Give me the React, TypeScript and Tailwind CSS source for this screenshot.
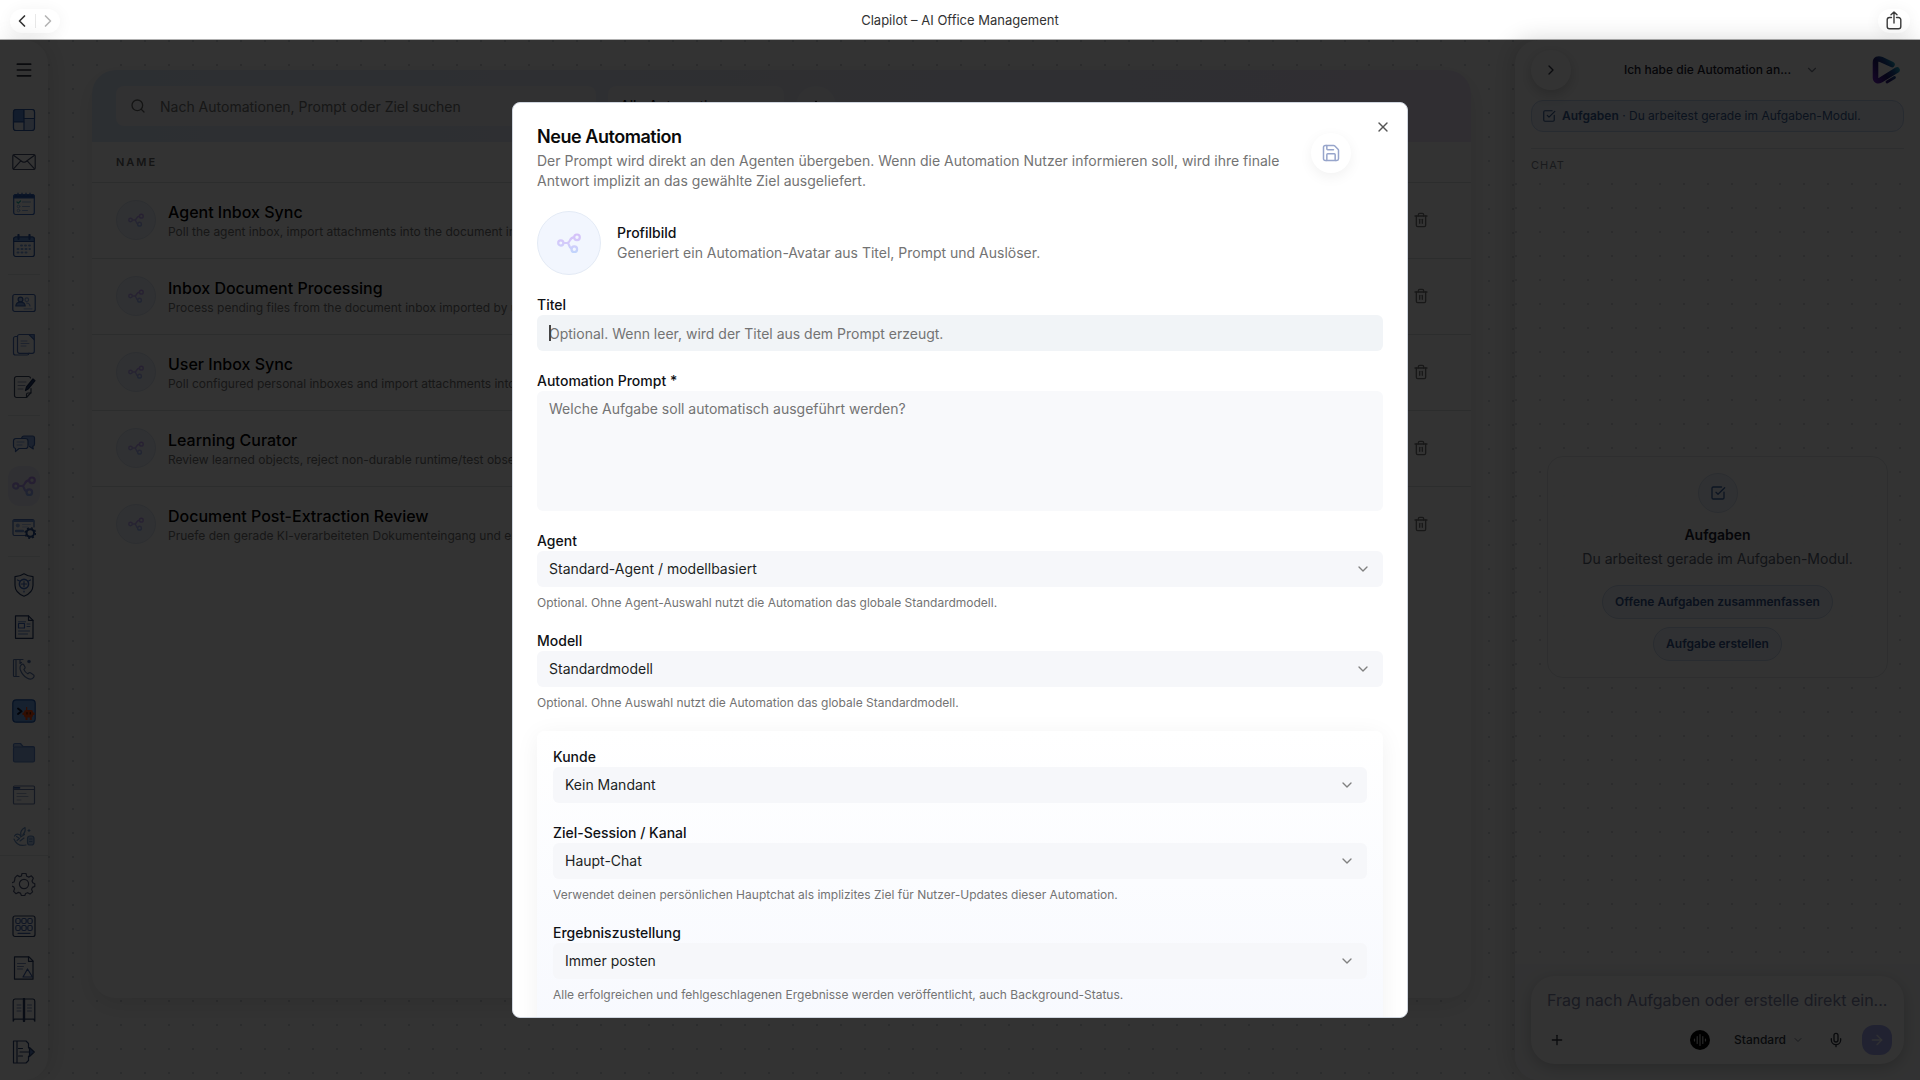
import React from "react";
import {
  ArrowRight,
  ChevronDown,
  ChevronLeft,
  ChevronRight,
  Menu,
  Mic,
  Plus,
  Save,
  Search,
  SquareCheckBig,
  Trash2,
  X,
} from "lucide-react";

const FlowIcon = ({ className = "" }: { className?: string }) => (
  <svg viewBox="0 0 24 24" fill="none" className={className}>
    <defs>
      <linearGradient id="flow" x1="12" y1="2" x2="12" y2="22" gradientUnits="userSpaceOnUse">
        <stop offset="0" stopColor="#b98af5" />
        <stop offset="0.5" stopColor="#b7a0f8" />
        <stop offset="1" stopColor="#8fb4fb" />
      </linearGradient>
    </defs>
    <g stroke="url(#flow)" strokeWidth="2.2" strokeLinecap="round">
      <circle cx="3.8" cy="12" r="2.6" />
      <circle cx="20" cy="6.3" r="2.8" />
      <circle cx="17.3" cy="18.2" r="2.8" />
      <path d="M7 12h4M10.5 12c3-.6 1.6-5.2 6.4-5.6M10.5 12c2.2.8 1 4.400 4 5.600" />
    </g>
  </svg>
);

const Icon = ({ children, color = "#3b64b5" }: { children: React.ReactNode; color?: string }) => (
  <svg
    viewBox="0 0 24 24"
    fill="none"
    stroke={color}
    strokeWidth="1.2"
    strokeLinecap="round"
    strokeLinejoin="round"
    className="size-6"
  >
    {children}
  </svg>
);

type NavItem = { label: string; icon: React.ReactNode; active?: boolean };

const navGroups: NavItem[][] = [
  [
    {
      label: "Dashboard",
      icon: (
        <Icon color="#2f5cab">
          <rect x="1.5" y="1.5" width="21" height="21" rx="2.5" fill="#c3d6f7" />
          <path d="M4 1.5h8V14H1.5V4A2.5 2.5 0 0 1 4 1.5z" fill="#5d8ddb" />
          <path d="M12 1.5h8A2.5 2.5 0 0 1 22.5 4v6.500H12zM1.500 14H12v8.500H4A2.500 2.500 0 0 1 1.500 20z" fill="#eef3fc" />
        </Icon>
      ),
    },
    {
      label: "E-Mail",
      icon: (
        <Icon color="#46506e">
          <rect x=".8" y="4.5" width="22.4" height="15" rx="1.5" />
          <path d="M1.5 5.300 10 11.500c1.400 1 2.600 1 4 0l8.500-6.200M1.500 18.800l7.300-8M22.500 18.800l-7.300-8" />
        </Icon>
      ),
    },
    {
      label: "Aufgaben",
      icon: (
        <Icon color="#3a6cc4">
          <rect x="1.7" y="2.5" width="20.6" height="20" rx="2" />
          <path d="M1.7 6V4.5a2 2 0 0 1 2-2h16.600a2 2 0 0 1 2 2V6z" fill="#2a5cb4" />
          <path d="M6 1v2.500M10 1v2.500M14 1v2.500M18 1v2.500" />
          <g stroke="#8fb5e8" strokeWidth="1">
            <path d="M10.5 10h8M10.5 14.5h7M10.5 18.5h5" />
            <circle cx="6.5" cy="14.5" r="1.3" />
            <circle cx="6.5" cy="18.5" r="1.3" />
          </g>
          <path d="m5 10 1.200 1.200L8.500 9" stroke="#22b8b0" />
        </Icon>
      ),
    },
    {
      label: "Kalender",
      icon: (
        <Icon color="#2c58a8">
          <rect x="1.7" y="3" width="20.6" height="19.5" rx="2" />
          <path d="M1.700 7.500V5a2 2 0 0 1 2-2h16.600a2 2 0 0 1 2 2v2.500z" fill="#6c9ae0" />
          <path d="M6.5 1v4M17.5 1v4" strokeWidth="2.2" />
          <path d="M9 11.500h9M5.500 15h12.500M5.500 18.500h9" stroke="#7fa7e6" strokeWidth="2" strokeDasharray="1 3" />
        </Icon>
      ),
    },
  ],
  [
    {
      label: "Kontakte",
      icon: (
        <Icon color="#3f67b4">
          <rect x=".8" y="3.5" width="22.4" height="17" rx="2" />
          <circle cx="8.5" cy="8.5" r="2.4" fill="#b7cdf4" />
          <path d="M3.800 15c.3-2.600 2-3.800 4.700-3.800s4.400 1.200 4.700 3.800z" fill="#7ca3e6" />
          <circle cx="14.8" cy="8.7" r="1.8" stroke="#86a8e6" />
          <path d="M14.5 12c2 0 3.200.8 3.500 3" stroke="#86a8e6" />
          <path d="M12 17.8h8" stroke="#a9c1ee" />
        </Icon>
      ),
    },
    {
      label: "Dokumente",
      icon: (
        <Icon color="#4a70ba">
          <path d="M5.500 3.500h-2a2 2 0 0 0-2 2V20a2 2 0 0 0 2 2h11.500a2 2 0 0 0 2-1.800" />
          <path d="M7.500 1.500h10l4.800 4.800v12a2 2 0 0 1-2 2H7.500a2 2 0 0 1-2-2V3.500a2 2 0 0 1 2-2z" />
          <path d="M17 1.500h5.300v5.300z" fill="#7ca3e6" />
          <path d="M9 8h6M9 10.500h8M9 13h5" stroke="#94b1e4" strokeWidth="1" />
        </Icon>
      ),
    },
    {
      label: "Notizen",
      icon: (
        <Icon color="#3b4660">
          <path d="M19 13.500v4L14.500 22.500H4.500a2 2 0 0 1-2-2v-17a2 2 0 0 1 2-2h12a2 2 0 0 1 2 1.500" />
          <path d="M14.500 22.500v-3a1.500 1.500 0 0 1 1.500-1.500h3" />
          <path d="M6 7h8M6 10.500h7M6 14h5" stroke="#8b97b5" strokeWidth="1" />
          <path d="m13.500 15.500 1-3.500 6.500-8 2 1.700-6.500 8z" fill="#26427e" stroke="#1d2f57" />
        </Icon>
      ),
    },
  ],
  [
    {
      label: "Chat",
      icon: (
        <Icon color="#3f67b4">
          <path d="M9.500 6.500c.3-1.500 1-2.500 2.500-2.500h8.500a2 2 0 0 1 2 2v6a2.500 2.500 0 0 1-1.800 2.400l.6 2.600-3.800-2.500" fill="#88abe8" />
          <path d="M4 6.500h9.500A2.500 2.500 0 0 1 16 9v5a2.500 2.500 0 0 1-2.500 2.500H7L3.500 19.500v-3A2.500 2.500 0 0 1 1.500 14V9A2.500 2.500 0 0 1 4 6.500z" fill="#eef3fc" />
          <path d="M5 10h7M5 13h5" stroke="#8fb0e8" strokeWidth="1" />
        </Icon>
      ),
    },
    { label: "Automationen", icon: <FlowIcon className="size-6" />, active: true },
    {
      label: "Portale",
      icon: (
        <Icon color="#4a70ba">
          <path d="M13 19.500H2.500a1.500 1.500 0 0 1-1.500-1.500V5A1.500 1.500 0 0 1 2.500 3.500h18A1.500 1.500 0 0 1 22 5v6" />
          <path d="M1.500 5h20" strokeWidth="2" stroke="#6f98dd" />
          <circle cx="5.8" cy="9.5" r="2" fill="#94b5ec" stroke="none" />
          <path d="M4 15h7" strokeWidth="2.4" stroke="#6f98dd" />
          <path d="M10.5 8.500h8M10.500 11h5" stroke="#b9cdf1" strokeWidth="1" />
          <circle cx="18.3" cy="17" r="3.8" stroke="#234a8f" strokeWidth="2" />
          <circle cx="18.3" cy="17" r="5.2" stroke="#234a8f" strokeWidth="1.4" strokeLinecap="butt" strokeDasharray="2 2.08" />
        </Icon>
      ),
    },
  ],
  [
    {
      label: "Sicherheit",
      icon: (
        <Icon color="#243a66">
          <path d="M12 .8c3 2 5.500 2.600 9 2.800v8.600c0 5.200-3.500 8.800-9 11-5.500-2.200-9-5.800-9-11V3.600c3.500-.2 6-.8 9-2.800z" />
          <circle cx="12" cy="11" r="4.6" stroke="#3e6bc2" strokeWidth="1.6" />
          <path d="M12 8.500v5M9.500 11h5M5.500 7l2 1M18.500 7l-2 1M12 18v1" stroke="#3e6bc2" />
        </Icon>
      ),
    },
    {
      label: "Rechnungen",
      icon: (
        <Icon color="#243a66">
          <path d="M3.500.8h13l4.500 4.500v18H3.500z" />
          <path d="M16.500.8v4.500H21" />
          <rect x="6.5" y="8.5" width="6" height="4.5" stroke="#3e6bc2" />
          <path d="M6.500 6.800h7M15 9h3M15 11.500h3M6.500 16h11M6.500 19h9" stroke="#5c83c9" strokeWidth="1" />
        </Icon>
      ),
    },
    {
      label: "Telefonie",
      icon: (
        <Icon color="#5d7aaf">
          <path d="M7 19.500H2.500a1 1 0 0 1-1-1v-15a1 1 0 0 1 1-1H11M4 2.500v17M8 2.500v4l1.500-1" />
          <path d="M9 8c1-1.200 2.200-1 3 .2l1 1.800c.4 1-.4 1.800-1.200 2.400.8 2 2 3.400 4 4.400.8-.8 1.600-1.600 2.600-1l2.600 1.600c1.400.8 1.400 2 .4 3.200-1.600 2-4 1.800-6.400.4-3-1.800-5.400-4.600-6.600-8C7.800 11 7.800 9.300 9 8z" />
          <circle cx="17" cy="4.5" r="1.2" fill="#2f5cab" />
        </Icon>
      ),
    },
    {
      label: "Terminal",
      icon: (
        <Icon color="#1d57b0">
          <rect x=".8" y=".8" width="22.4" height="22.4" rx="3.5" fill="#6da3e8" />
          <path d="m6 9.500 3.500 2.800L6 15" stroke="#0c1730" strokeWidth="2" />
          <g stroke="none" fill="#f8480b">
            <rect x="12" y="11" width="9" height="7.5" rx="2" />
            <path d="M10.500 13.500h12v2.500h-12zM13.500 18h2v3h-2zM17.800 18h2v3h-2zM14 8h1.200v3.500H14z" />
          </g>
          <path d="M15 13.500v1.500M18.300 13.500v1.500" stroke="#3c1608" />
        </Icon>
      ),
    },
    {
      label: "Dateien",
      icon: (
        <Icon color="#5b84ca">
          <path d="M1.500 6V4a1.500 1.500 0 0 1 1.500-1.500h5.500L11 5.500h10A1.500 1.500 0 0 1 22.500 7" fill="#a9c1e8" />
          <rect x="1.5" y="6" width="21" height="15" rx="1.5" fill="#8eb0e6" />
        </Icon>
      ),
    },
    {
      label: "Browser",
      icon: (
        <Icon color="#6a7fae">
          <rect x="1.5" y="3" width="21" height="18" rx="1" />
          <path d="M1.500 6.500h21" />
          <path d="M2.500 4.800h5" stroke="#3f67b4" strokeWidth="1.8" />
          <path d="M5 10.500h9M5 13.500h11M5 17h4" stroke="#a8b7d8" strokeWidth="1" />
        </Icon>
      ),
    },
    {
      label: "Wissen",
      icon: (
        <Icon color="#6c94c9">
          <path d="M9 10c-1-3 .5-5.500 4-7.500.5 2.500 0 5-2 7M2.500 11c1.500-2.500 4-2.500 6-.5M2 14c2 5 6 7.500 12 6M4.500 11.500l3 2-2.500 2M8.500 12l4-2.500M8 16l4-3" />
          <path d="M16 5.500h2M17 4.500v2" />
          <rect x="15.5" y="11" width="6.5" height="9" rx="2.5" fill="#b4cbee" />
          <path d="M17.500 14h2.500M17.500 16.500h2.500" strokeWidth="1" />
        </Icon>
      ),
    },
  ],
];

const footerNav: NavItem[] = [
  {
    label: "Einstellungen",
    icon: (
      <Icon color="#4d5678">
        <circle cx="12" cy="12" r="4.6" />
        <path d="M10 1.500h4l.8 2.800 2 .8L19.400 3.800l1.900 2.400-1.300 2.700.8 1.900 2 1v2.600l-2.400 1-.8 2 1 2.500-2.600 2.200-2.400-1.400-2 .8-.8 2h-3.400l-1-2.400-2-.7-2.400 1.300-2.400-2.300 1-2.600-.8-1.900-2.300-1v-3l2.500-.9.7-2L3 5.600l2.300-2.200 2.300 1.200 1.800-.6z" />
      </Icon>
    ),
  },
  {
    label: "Nummernblock",
    icon: (
      <Icon color="#2c3f68">
        <rect x="1" y="2" width="22" height="20.5" rx="2" />
        <g stroke="#4569b3">
          <rect x="3.8" y="4.5" width="4.4" height="5" rx="1.5" />
          <rect x="9.8" y="4.5" width="4.4" height="5" rx="1.5" />
          <rect x="15.8" y="4.5" width="4.4" height="5" rx="1.5" />
          <rect x="3.8" y="11.5" width="4.4" height="5" rx="1.5" />
          <rect x="9.8" y="11.5" width="4.4" height="5" rx="1.5" />
          <rect x="15.8" y="11.5" width="4.4" height="5" rx="1.5" />
          <path d="M6 19.300h12" />
        </g>
      </Icon>
    ),
  },
  {
    label: "Fehlerprotokoll",
    icon: (
      <Icon color="#2c3f68">
        <path d="M2.500.8h14.500l4 4.200v18.200H2.500z" />
        <path d="M16.500.8v4.500H21" />
        <path d="M5.500 7.500h8M5.500 10.500h6M5.500 13h5" stroke="#7c93c4" strokeWidth="1" />
        <path d="m15.500 13 5 8h-9.500z" stroke="#3e62ab" />
      </Icon>
    ),
  },
  {
    label: "Handbuch",
    icon: (
      <Icon color="#2c3f68">
        <path d="M1.200 23.200V3A2 2 0 0 1 3 1h18a2 2 0 0 1 1.800 2v20.200l-1-2H2.200z" />
        <path d="M12 1v22" strokeWidth="2.4" />
        <path d="M5 7h4M5 10h4M5 13h4M15.500 7h4M15.500 10h4M15.500 13h4" stroke="#7c93c4" strokeWidth="1" />
      </Icon>
    ),
  },
  {
    label: "Abmelden",
    icon: (
      <Icon color="#2c4474">
        <path d="M16.500 8V3.500L14 1H1.500v22H14l2.500-2.500V16M5 1v22" />
        <path d="M8 12h10.500M6.500 8.500h4M6.500 16h4" />
        <path d="m17.500 7.500 4.800 4.500-4.800 4.500z" fill="#5b80c5" />
      </Icon>
    ),
  },
];

const automations = [
  { name: "Agent Inbox Sync", text: "Poll the agent inbox, import attachments into the document inbox" },
  { name: "Inbox Document Processing", text: "Process pending files from the document inbox imported by users" },
  { name: "User Inbox Sync", text: "Poll configured personal inboxes and import attachments into" },
  { name: "Learning Curator", text: "Review learned objects, reject non-durable runtime/test observations" },
  { name: "Document Post-Extraction Review", text: "Pruefe den gerade KI-verarbeiteten Dokumenteingang und ergaenze" },
];

const NavButton = ({ item }: { item: NavItem }) => (
  <button
    aria-label={item.label}
    className={`flex h-10 w-8 shrink-0 items-center justify-center rounded-xl ${item.active ? "bg-[#eeeefc]" : ""}`}
  >
    {item.icon}
  </button>
);

const Sidebar = () => (
  <nav className="flex w-12 shrink-0 flex-col items-center rounded-r-3xl bg-white pb-2 shadow-[4px_0_24px_rgba(0,0,0,0.12)]">
    <button aria-label="Menü" className="flex h-15 w-8 shrink-0 items-center justify-center text-[#303640]">
      <Menu className="size-5" strokeWidth={2} />
    </button>
    <div className="flex min-h-0 flex-1 flex-col items-center overflow-hidden">
      {navGroups.map((group, i) => (
        <React.Fragment key={i}>
          {i > 0 && <div className="my-2 h-px w-8 shrink-0 bg-[#e6e8ec]" />}
          <div className="flex shrink-0 flex-col gap-0.5">
            {group.map((item) => (
              <NavButton key={item.label} item={item} />
            ))}
          </div>
        </React.Fragment>
      ))}
    </div>
    <div className="flex w-full shrink-0 flex-col items-center gap-0.5 border-t border-[#e6e8ec] pt-2">
      {footerNav.map((item) => (
        <NavButton key={item.label} item={item} />
      ))}
    </div>
  </nav>
);

const AutomationList = () => (
  <main className="flex min-w-0 flex-1 px-11 pt-[30px] pb-[82px]">
    <div className="flex min-w-0 flex-1 flex-col overflow-hidden rounded-3xl bg-white shadow-[0_8px_24px_rgba(0,0,0,0.10)]">
      <div className="flex h-[72px] shrink-0 items-center gap-3 bg-linear-to-r from-[#dce8fa] via-[#e8eaf6] to-[#eee6fa] px-6">
        <div className="flex h-10 w-[480px] items-center gap-3.5 rounded-lg bg-[#f2f4f8] px-3.5">
          <Search className="size-4 shrink-0 text-[#666]" />
          <input
            aria-label="Automationen suchen"
            placeholder="Nach Automationen, Prompt oder Ziel suchen"
            className="w-full bg-transparent pt-0.5 text-sm outline-none placeholder:text-[#737373]"
          />
        </div>
        <select aria-label="Automationen filtern" className="h-10 w-44 appearance-none rounded-lg bg-[#f2f4f8] px-3 text-sm">
          <option>Alle Automationen</option>
        </select>
        <button aria-label="Automation anlegen" className="flex size-10 items-center justify-center rounded-full bg-[#f2f4f8]">
          <Plus className="size-4" />
        </button>
      </div>
      <table className="w-full table-fixed border-collapse">
        <thead>
          <tr className="h-10 border-b border-[#dcdee2]">
            <th className="pl-6 text-left text-[11px] font-semibold tracking-[2px] text-[#666]">NAME</th>
            <th aria-label="Aktionen" className="w-40" />
          </tr>
        </thead>
        <tbody>
          {automations.map((a) => (
            <tr key={a.name} className="h-[76px] border-b border-[#dcdee2] last:border-0">
              <td className="pl-6">
                <div className="flex items-center gap-3">
                  <span className="flex size-10 shrink-0 items-center justify-center rounded-full border border-[#dde5f2] bg-[#eff4fd]">
                    <FlowIcon className="size-4 opacity-80" />
                  </span>
                  <div className="min-w-0 pt-1">
                    <div className="text-base leading-5 font-medium text-black">{a.name}</div>
                    <div className="truncate text-xs leading-5 text-[#737373]">{a.text}</div>
                  </div>
                </div>
              </td>
              <td className="pr-8 text-right">
                <button aria-label={`${a.name} löschen`} className="inline-flex size-9 items-center justify-center text-[#777]">
                  <Trash2 className="size-4" />
                </button>
              </td>
            </tr>
          ))}
        </tbody>
      </table>
    </div>
  </main>
);

const Logo = () => (
  <svg viewBox="0 0 28 28" fill="none" className="mr-1 size-7">
    <defs>
      <linearGradient id="mark" x1="3" y1="24" x2="26" y2="8" gradientUnits="userSpaceOnUse">
        <stop offset="0" stopColor="#6420b8" />
        <stop offset="0.4" stopColor="#231a70" />
        <stop offset="0.7" stopColor="#1b4f9c" />
        <stop offset="1" stopColor="#20bfd0" />
      </linearGradient>
    </defs>
    <g stroke="url(#mark)" strokeLinecap="round" strokeLinejoin="round">
      <path d="M20 8.500 9.500 3.600C6 2 3.500 3.500 3.500 6.500v15c0 3 2.500 4 5 2.600L25 14" strokeWidth="5.6" />
      <path d="m15 26 7.500-4.500" strokeWidth="2.8" />
    </g>
  </svg>
);

const ChatPanel = () => (
  <aside className="flex w-[405px] shrink-0 flex-col overflow-hidden rounded-l-3xl bg-white shadow-[-4px_0_24px_rgba(0,0,0,0.16)]">
    <div className="px-4 pt-2.5">
      <div className="flex h-10 items-center justify-between">
        <button
          aria-label="Chat einklappen"
          className="flex size-10 items-center justify-center rounded-full bg-white text-[#333a48] shadow-[0_4px_14px_rgba(0,0,0,0.2)]"
        >
          <ChevronRight className="size-4" />
        </button>
        <button className="flex items-center gap-3.5 text-xs font-medium text-[#1c2230]">
          Ich habe die Automation an...
          <ChevronDown className="size-3.5 text-[#7a8090]" />
        </button>
        <Logo />
      </div>
      <div className="mt-2.5 flex h-8 items-center gap-1.5 rounded-xl border border-[#c3d4ee] bg-[#edf3fc] px-2.5 text-xs text-[#3a5f97]">
        <SquareCheckBig className="size-3.5 shrink-0" />
        <span className="truncate">
          <strong className="font-semibold">Aufgaben</strong> · Du arbeitest gerade im Aufgaben-Modul.
        </span>
      </div>
      <div className="mt-4 border-t border-[#e2e4e8] pt-2 text-[11px] leading-4 tracking-[1px] text-[#7c828e]">CHAT</div>
    </div>
    <div className="mt-2.5 flex flex-1 items-center justify-center bg-[radial-gradient(circle_at_1px_1px,#dadde2_1px,transparent_0)] bg-size-[24px_24px] px-8 pb-3.5">
      <div className="flex w-full flex-col items-center rounded-2xl border border-[#e4e6ea] bg-white/90 p-4">
        <span className="flex size-10 items-center justify-center rounded-full border border-[#d6e0f0] bg-[#f0f5fd] text-[#3d67a8]">
          <SquareCheckBig className="size-4" />
        </span>
        <h2 className="mt-3 text-sm leading-5 font-semibold text-[#1c2230]">Aufgaben</h2>
        <p className="mt-1 text-sm leading-5 text-[#5c6474]">Du arbeitest gerade im Aufgaben-Modul.</p>
        <div className="mt-4 flex flex-col items-center gap-2">
          <button className="h-[34px] rounded-full border border-[#cbd9ef] bg-[#f0f5fd] px-3 text-xs font-semibold text-[#35588f]">
            Offene Aufgaben zusammenfassen
          </button>
          <button className="h-[34px] rounded-full border border-[#cbd9ef] bg-[#f0f5fd] px-3 text-xs font-semibold text-[#35588f]">
            Aufgabe erstellen
          </button>
        </div>
      </div>
    </div>
    <div className="bg-[#fafbfc] px-4 pt-3 pb-4">
      <div className="rounded-3xl bg-white pt-3 pr-3 pb-2 pl-4 shadow-[0_4px_16px_rgba(0,0,0,0.2)]">
        <input
          aria-label="Nachricht"
          placeholder="Frag nach Aufgaben oder erstelle direkt ein..."
          className="block h-6 w-full bg-transparent text-base outline-none placeholder:text-[#8085a8]"
        />
        <div className="mt-3 flex h-8 items-center text-[#303640]">
          <button aria-label="Anhang" className="flex size-5 items-center justify-center">
            <Plus className="size-4" />
          </button>
          <button aria-label="Sprachmodus" className="ml-auto flex size-5 items-center justify-center rounded-full bg-black">
            <svg viewBox="0 0 20 20" stroke="#c8c8c8" strokeWidth="1.2" strokeLinecap="round" className="size-5">
              <path d="M4.500 9v2M7.200 6.500v7M10 4.500v11M12.800 6.500v7M15.500 9v2" />
            </svg>
          </button>
          <button className="ml-6 flex items-center gap-1.5 text-xs font-medium">
            Standard
            <ChevronDown className="size-3 text-[#7a8090]" />
          </button>
          <button aria-label="Diktieren" className="ml-5 flex size-6 items-center justify-center">
            <Mic className="size-4" />
          </button>
          <button aria-label="Senden" className="ml-3.5 flex size-[30px] items-center justify-center rounded-xl bg-[#a7acf2] text-white/80">
            <ArrowRight className="size-4" />
          </button>
        </div>
      </div>
    </div>
  </aside>
);

const labelClass = "text-sm leading-5 font-medium text-[#0f1115]";

interface SelectFieldProps {
  id: string;
  label: string;
  value: string;
  hint?: string;
}

const SelectField: React.FC<SelectFieldProps> = ({ id, label, value, hint }) => (
  <div className="flex flex-col">
    <label htmlFor={id} className={labelClass}>
      {label}
    </label>
    <div className="relative">
      <select id={id} className="block h-9 w-full appearance-none rounded-md bg-[#f6f7fa] px-3 text-sm text-[#1c1f24] outline-none">
        <option>{value}</option>
      </select>
      <ChevronDown className="pointer-events-none absolute top-2.5 right-3 size-4 text-[#808080]" />
    </div>
    {hint && <p className="mt-2 text-xs leading-4 text-[#737373]">{hint}</p>}
  </div>
);

const AutomationDialog = () => (
  <div
    role="dialog"
    aria-labelledby="dialog-title"
    className="relative h-[88%] w-full max-w-4xl overflow-hidden rounded-lg border border-[#cfd5de] bg-white p-6"
  >
    <button aria-label="Schließen" className="absolute top-4 right-4 flex size-4 items-center justify-center text-[#555]">
      <X className="size-4" />
    </button>
    <form className="flex flex-col gap-5">
      <div className="flex items-start justify-between gap-3 pr-8">
        <div className="max-w-[750px]">
          <h1 id="dialog-title" className="text-lg leading-5 font-semibold tracking-tight text-[#0a0a0a]">
            Neue Automation
          </h1>
          <p className="mt-1 text-sm leading-5 text-[#737373]">
            Der Prompt wird direkt an den Agenten übergeben. Wenn die Automation Nutzer informieren soll, wird ihre finale
            Antwort implizit an das gewählte Ziel ausgeliefert.
          </p>
        </div>
        <button
          aria-label="Speichern"
          className="mt-1.5 flex size-10 shrink-0 items-center justify-center rounded-full bg-white text-[#97a5cb] shadow-[0_4px_14px_rgba(0,0,0,0.06)]"
        >
          <Save className="size-5" strokeWidth={1.8} />
        </button>
      </div>
      <div className="flex items-center gap-4">
        <span className="flex size-16 items-center justify-center rounded-full border border-[#e3eaf5] bg-[#f2f6fe]">
          <FlowIcon className="size-6 opacity-50" />
        </span>
        <div className="text-sm leading-5">
          <div className="font-medium text-[#0f1115]">Profilbild</div>
          <p className="text-[#737373]">Generiert ein Automation-Avatar aus Titel, Prompt und Auslöser.</p>
        </div>
      </div>
      <div className="flex flex-col">
        <label htmlFor="titel" className={labelClass}>
          Titel
        </label>
        <div className="relative">
          <input
            id="titel"
            placeholder="Optional. Wenn leer, wird der Titel aus dem Prompt erzeugt."
            className="block h-9 w-full rounded-md bg-[#f1f4f7] px-3 text-sm outline-none placeholder:text-[#737373]"
          />
          <span className="absolute top-2.5 left-3 h-4 w-0.5 bg-[#444]" />
        </div>
      </div>
      <div className="flex flex-col">
        <label htmlFor="prompt" className={labelClass}>
          Automation Prompt *
        </label>
        <textarea
          id="prompt"
          placeholder="Welche Aufgabe soll automatisch ausgeführt werden?"
          className="block h-30 w-full resize-none rounded-md bg-[#f8f9fb] px-3 py-2 text-sm leading-5 outline-none placeholder:text-[#737373]"
        />
      </div>
      <SelectField
        id="agent"
        label="Agent"
        value="Standard-Agent / modellbasiert"
        hint="Optional. Ohne Agent-Auswahl nutzt die Automation das globale Standardmodell."
      />
      <SelectField
        id="modell"
        label="Modell"
        value="Standardmodell"
        hint="Optional. Ohne Auswahl nutzt die Automation das globale Standardmodell."
      />
      <div className="flex flex-col gap-5 rounded-lg bg-linear-to-b from-white to-[#f7f9fe] px-4 pt-4 pb-8 shadow-[0_4px_24px_rgba(0,0,0,0.06)]">
        <SelectField id="kunde" label="Kunde" value="Kein Mandant" />
        <SelectField
          id="ziel"
          label="Ziel-Session / Kanal"
          value="Haupt-Chat"
          hint="Verwendet deinen persönlichen Hauptchat als implizites Ziel für Nutzer-Updates dieser Automation."
        />
        <SelectField
          id="ergebnis"
          label="Ergebniszustellung"
          value="Immer posten"
          hint="Alle erfolgreichen und fehlgeschlagenen Ergebnisse werden veröffentlicht, auch Background-Status."
        />
      </div>
    </form>
  </div>
);

const TitleBar = () => (
  <header className="grid h-10 shrink-0 grid-cols-3 items-center border-b border-[#b0b0b0] bg-white px-2.5 pt-0.5">
    <div className="flex h-6 w-[50px] items-center justify-between rounded-full bg-white shadow-[0_2px_16px_rgba(0,0,0,0.06)]">
      <button aria-label="Zurück" className="flex w-6 justify-center text-[#333]">
        <ChevronLeft className="size-5" />
      </button>
      <span className="h-3.5 w-px bg-[#e8e8e8]" />
      <button aria-label="Vorwärts" className="flex w-6 justify-center text-[#b5b5b5]">
        <ChevronRight className="size-5" />
      </button>
    </div>
    <span className="text-center text-[13px] text-[#333]">Clapilot – AI Office Management</span>
    <button
      aria-label="Teilen"
      className="flex h-6 w-8 items-center justify-center justify-self-end rounded-full bg-white shadow-[0_2px_16px_rgba(0,0,0,0.06)]"
    >
      <svg viewBox="0 0 20 20" fill="none" stroke="#3a3a3a" strokeWidth="1.4" strokeLinecap="round" strokeLinejoin="round" className="size-5">
        <path d="M7.500 6.500H5.500A2.300 2.300 0 0 0 3.200 8.800V15.500a2.300 2.300 0 0 0 2.300 2.300h9a2.300 2.300 0 0 0 2.300-2.300V8.800a2.300 2.300 0 0 0-2.300-2.300h-2M10 12V1M7 3.800 10 1l3 2.800" />
      </svg>
    </button>
  </header>
);

const App: React.FC = () => (
  <div className="flex h-screen flex-col overflow-hidden bg-white font-['Inter',sans-serif]">
    <TitleBar />
    <div className="relative flex min-h-0 flex-1">
      <div className="flex min-w-0 flex-1 bg-[radial-gradient(circle_at_1px_1px,#d8dbe0_1px,transparent_0)] bg-size-[24px_24px]">
        <Sidebar />
        <AutomationList />
        <ChatPanel />
      </div>
      <div className="absolute inset-0 flex items-center justify-center bg-black/80">
        <AutomationDialog />
      </div>
    </div>
  </div>
);

export default App;
